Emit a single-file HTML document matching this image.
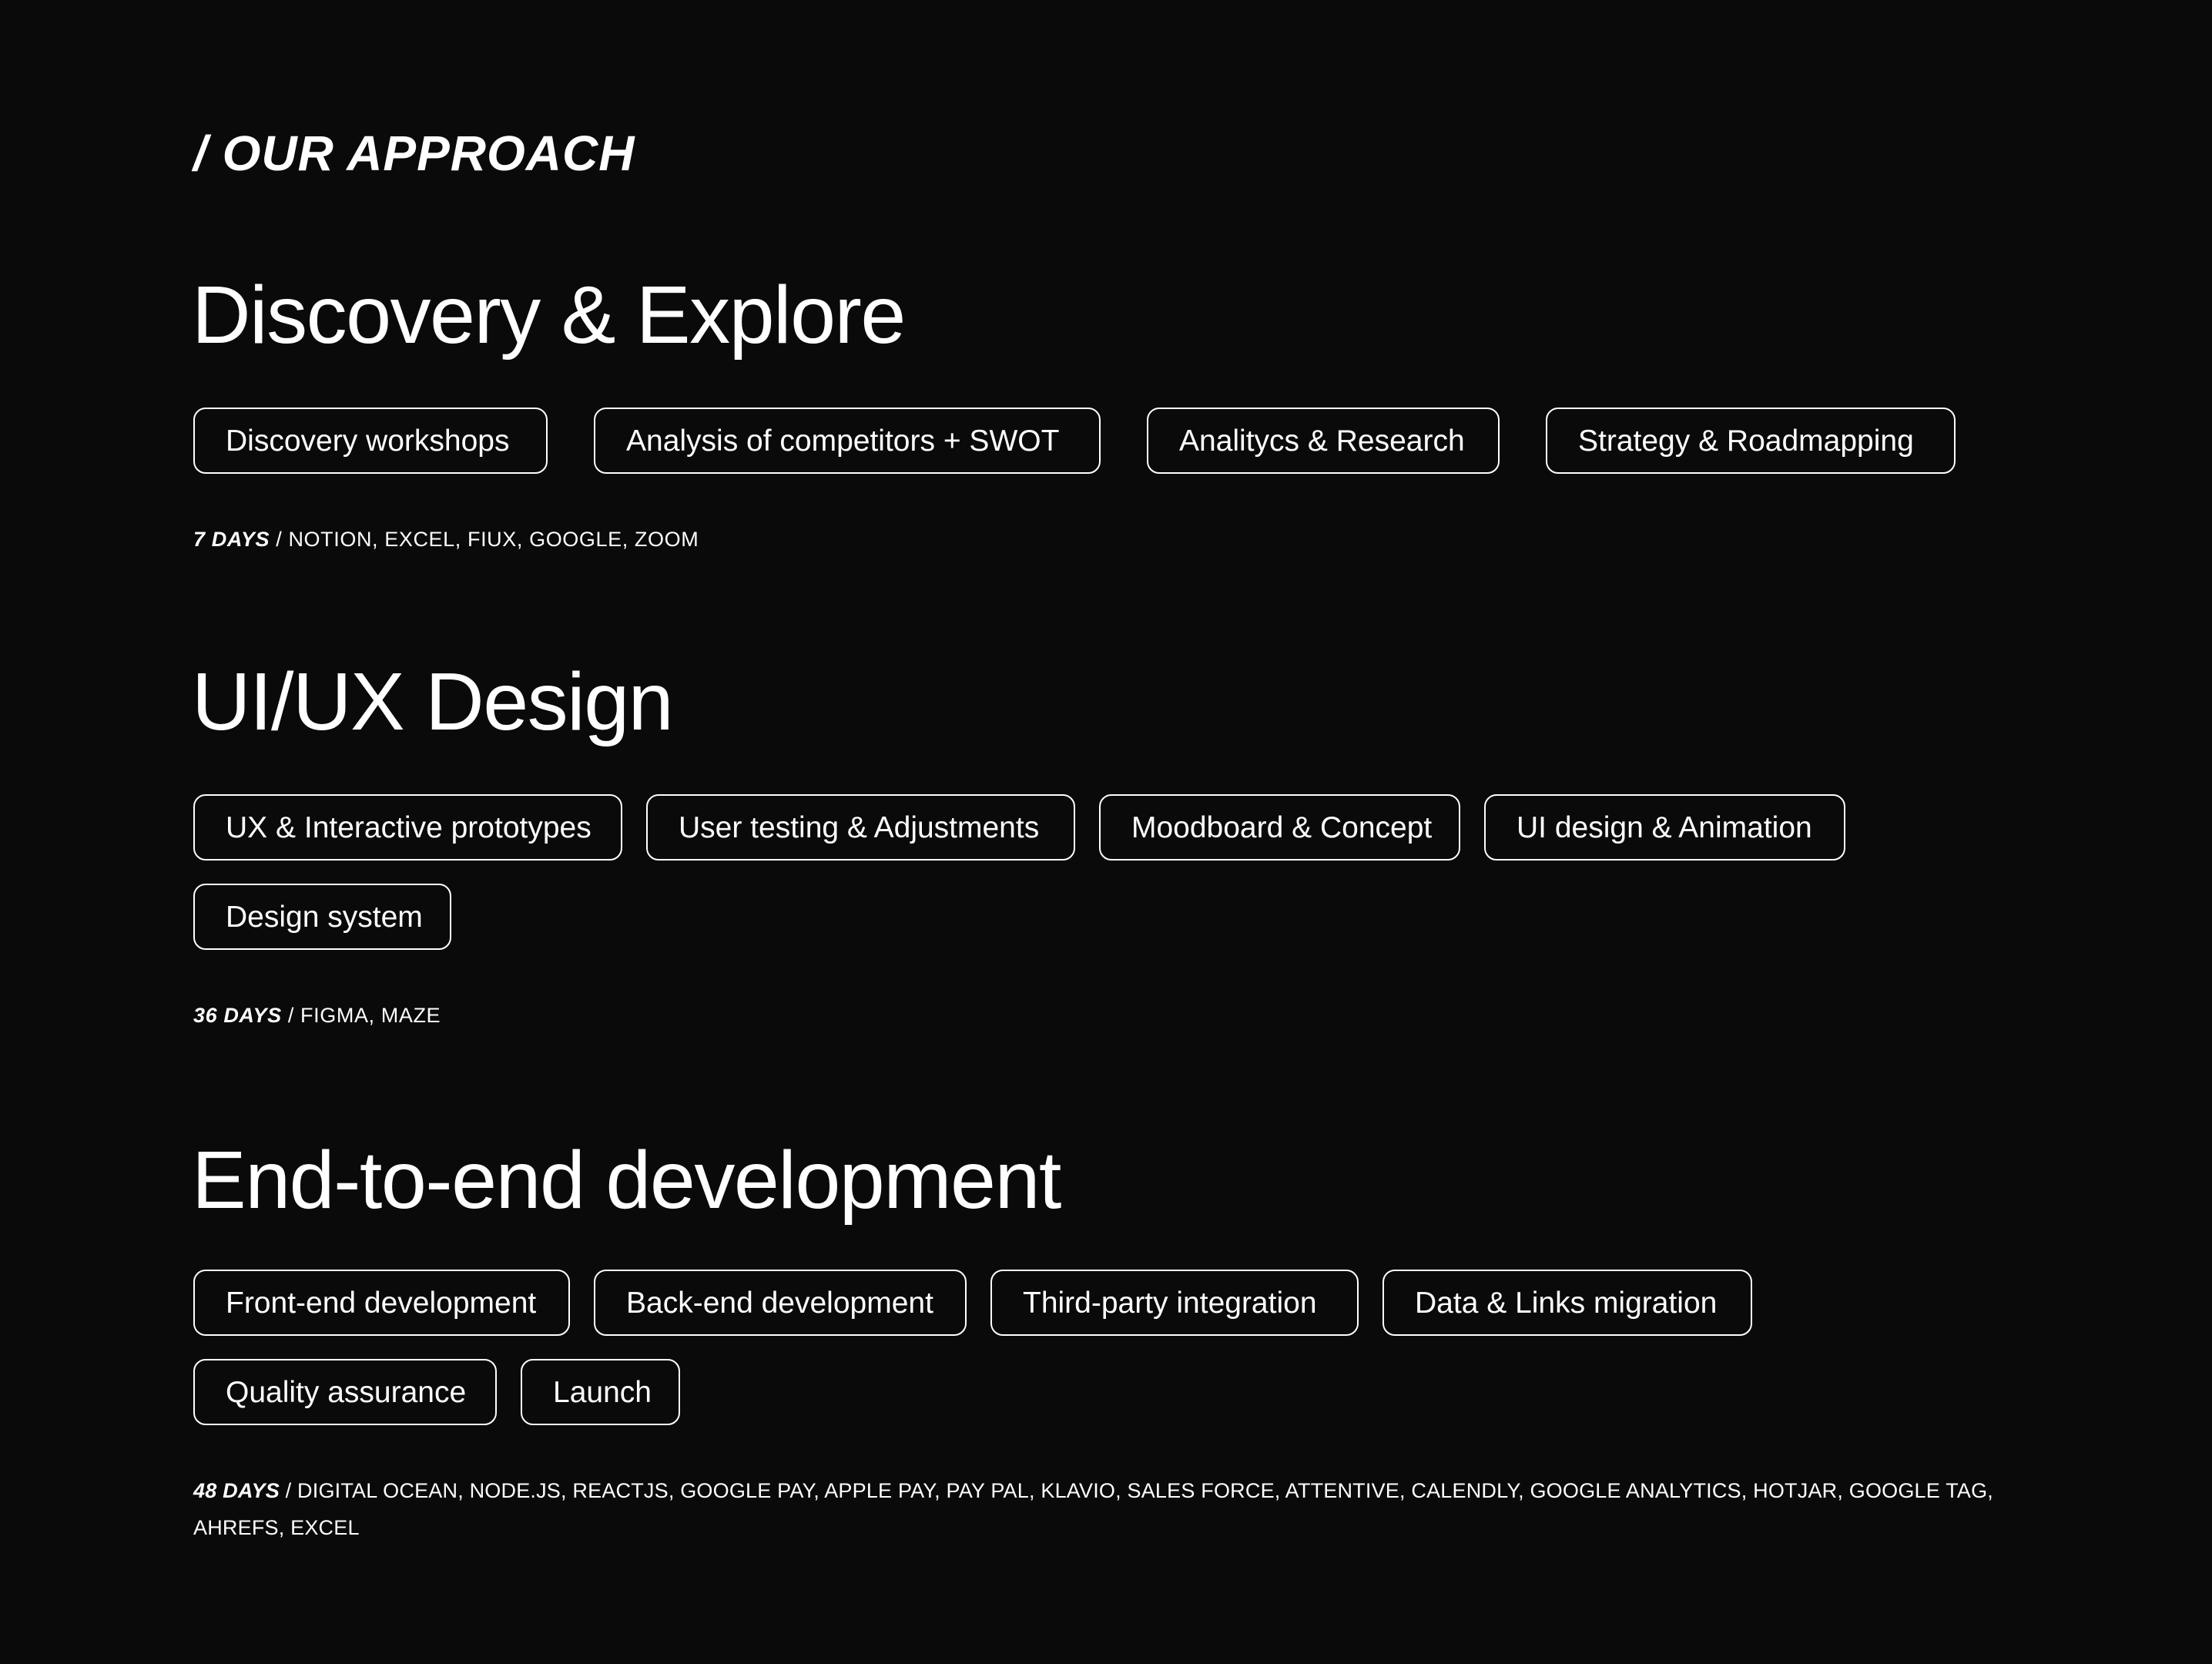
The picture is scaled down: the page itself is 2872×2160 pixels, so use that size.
<!DOCTYPE html>
<html><head><meta charset="utf-8"><style>
html,body{margin:0;padding:0;}
body{width:2872px;height:2160px;background:#0a0a0a;color:#fff;font-family:"Liberation Sans",sans-serif;position:relative;overflow:hidden;}
.a{position:absolute;white-space:nowrap;line-height:1;}
.hdr{left:251px;top:167px;font-size:64px;font-style:italic;font-weight:bold;letter-spacing:1px;}
.h2{left:249px;font-size:106px;letter-spacing:-1.5px;}
.chip{position:absolute;box-sizing:border-box;border:2px solid #fff;border-radius:16px;height:86px;display:flex;align-items:center;padding-left:40px;padding-top:2px;font-size:39px;white-space:nowrap;}
.meta{left:251px;font-size:27px;letter-spacing:0.6px;line-height:48px;white-space:normal;width:2500px;}
.meta b{font-style:italic;}
</style></head><body>
<div class="a hdr">/ OUR APPROACH</div>

<div class="a h2" style="top:356px">Discovery &amp; Explore</div>
<div class="chip" style="left:251px;top:529px;width:460px">Discovery workshops</div>
<div class="chip" style="left:771px;top:529px;width:658px">Analysis of competitors + SWOT</div>
<div class="chip" style="left:1489px;top:529px;width:458px">Analitycs &amp; Research</div>
<div class="chip" style="left:2007px;top:529px;width:532px">Strategy &amp; Roadmapping</div>
<div class="a meta" style="top:676px"><b>7 DAYS</b> / NOTION, EXCEL, FIUX, GOOGLE, ZOOM</div>

<div class="a h2" style="top:858px">UI/UX Design</div>
<div class="chip" style="left:251px;top:1031px;width:557px">UX &amp; Interactive prototypes</div>
<div class="chip" style="left:839px;top:1031px;width:557px">User testing &amp; Adjustments</div>
<div class="chip" style="left:1427px;top:1031px;width:469px">Moodboard &amp; Concept</div>
<div class="chip" style="left:1927px;top:1031px;width:469px">UI design &amp; Animation</div>
<div class="chip" style="left:251px;top:1147px;width:335px">Design system</div>
<div class="a meta" style="top:1294px"><b>36 DAYS</b> / FIGMA, MAZE</div>

<div class="a h2" style="top:1479px">End-to-end development</div>
<div class="chip" style="left:251px;top:1648px;width:489px">Front-end development</div>
<div class="chip" style="left:771px;top:1648px;width:484px">Back-end development</div>
<div class="chip" style="left:1286px;top:1648px;width:478px">Third-party integration</div>
<div class="chip" style="left:1795px;top:1648px;width:480px">Data &amp; Links migration</div>
<div class="chip" style="left:251px;top:1764px;width:394px">Quality assurance</div>
<div class="chip" style="left:676px;top:1764px;width:207px">Launch</div>
<div class="a meta" style="top:1911px;letter-spacing:0.2px"><b>48 DAYS</b> / DIGITAL OCEAN, NODE.JS, REACTJS, GOOGLE PAY, APPLE PAY, PAY PAL, KLAVIO, SALES FORCE, ATTENTIVE, CALENDLY, GOOGLE ANALYTICS, HOTJAR, GOOGLE TAG,<br>AHREFS, EXCEL</div>
</body></html>
